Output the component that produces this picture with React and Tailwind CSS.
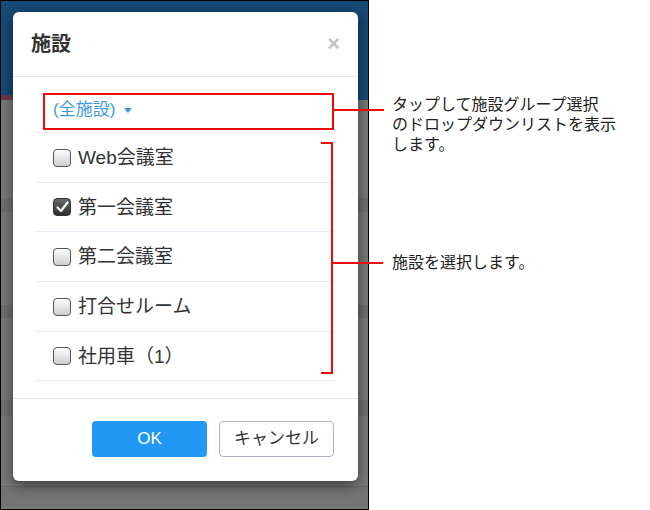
import React from 'react';

const jp = { fontFamily: '"Liberation Sans", "Noto Sans CJK JP", sans-serif' };

const facilities = [
  { id: 1, name: 'Web会議室', checked: false, h: 'h-[49px]' },
  { id: 2, name: '第一会議室', checked: true, h: 'h-[48px]' },
  { id: 3, name: '第二会議室', checked: false, h: 'h-[49px]' },
  { id: 4, name: '打合せルーム', checked: false, h: 'h-[49px]' },
  { id: 5, name: '社用車（1）', checked: false, h: 'h-[48px]' },
];

// iOS-style square checkbox
const CheckBox = ({ checked }) =>
  checked ? (
    <span className="w-[18px] h-[18px] rounded-[4px] border border-[#333] bg-gradient-to-b from-[#6a6a6a] to-[#2e2e2e] flex items-center justify-center shrink-0">
      <svg width="13" height="12" viewBox="0 0 13 12">
        <path d="M1.5 6.5 L5 10 L11.5 1.5" fill="none" stroke="#fff" strokeWidth="2.2" strokeLinecap="round" strokeLinejoin="round" />
      </svg>
    </span>
  ) : (
    <span className="w-[18px] h-[18px] rounded-[4px] border border-[#555] bg-gradient-to-b from-[#fdfdfd] to-[#cfcfcf] shrink-0" />
  );

const FacilityDialog = () => (
  <div className="absolute left-[12px] top-[11px] w-[345px] h-[469px] bg-white rounded-[6px] shadow-[0_4px_14px_rgba(0,0,0,0.55)] flex flex-col">
    <div className="h-[65px] flex items-center justify-between pl-[18px] pr-[18px] border-b border-[#e5e5e5] shrink-0">
      <h2 className="text-[20px] font-bold text-[#333] leading-none">施設</h2>
      <span className="text-[22px] font-bold text-[#c4c4c4] leading-none" style={{ fontFamily: '"Liberation Sans", sans-serif' }}>×</span>
    </div>

    <div className="px-[23px] pb-[17px]">
      <div className="h-[55px] flex items-end pb-[11px] pl-[17px] gap-[9px]">
        <span className="text-[17px] text-[#3d9be6] leading-[22px]">(全施設)</span>
        <span className="w-0 h-0 border-l-[4px] border-r-[4px] border-t-[5px] border-l-transparent border-r-transparent border-t-[#3d9be6] mb-[8px]" />
      </div>
      <ul className="border-t border-[#e4ebf4]">
        {facilities.map((f) => (
          <li key={f.id} className={`${f.h} box-content border-b border-[#e4ebf4] flex items-center pl-[17px] gap-[7px]`}>
            <CheckBox checked={f.checked} />
            <span className="text-[19px] text-[#333] leading-none">{f.name}</span>
          </li>
        ))}
      </ul>
    </div>

    <div className="flex-1 border-t border-[#e5e5e5] flex justify-end items-start pt-[22px] pr-[24px] gap-[12px]">
      <button className="w-[115px] h-[36px] rounded-[4px] bg-[#2199f4] text-white text-[17px]">OK</button>
      <button className="w-[115px] h-[36px] rounded-[4px] bg-white border border-[#a9b5c4] text-[#333] text-[17px]">キャンセル</button>
    </div>
  </div>
);

// dimmed app screen behind the modal
const DimmedScreen = () => (
  <div className="w-[369px] h-[510px] border border-black relative overflow-hidden bg-[#7a7a7a] shrink-0">
    <div className="h-[94px] bg-[#174a77]" />
    <div className="h-[5px] flex">
      <div className="w-[40px] bg-[#6e3a50]" />
      <div className="flex-1 bg-[#174a77]" />
    </div>
    <div className="h-[98px]" />
    <div className="h-[14px] bg-[#6f6f72]" />
    <div className="h-[93px]" />
    <div className="h-[13px] bg-[#6f6f72]" />
    <div className="h-[82px]" />
    <div className="h-[16px] bg-[#727274]" />
    <div className="h-[70px]" />
    <div className="h-[1px] bg-[#6a6a6a]" />
    <div className="h-[20px] bg-[#747474]" />
    <FacilityDialog />
  </div>
);

export default function App() {
  return (
    <div className="w-[650px] h-[510px] bg-white relative flex" style={jp}>
      <DimmedScreen />

      {/* callout: group dropdown */}
      <div className="absolute left-[43px] top-[93px] w-[291px] h-[37px] border-2 border-[#ee0a0a]" />
      <div className="absolute left-[334px] top-[109px] w-[50px] h-[2px] bg-[#ee0a0a]" />
      <p className="absolute left-[392px] top-[95px] w-[250px] text-[16px] leading-[20px] text-[#222]">
        タップして施設グループ選択
        <br />
        のドロップダウンリストを表示
        <br />
        します。
      </p>

      {/* callout: facility list bracket */}
      <div className="absolute left-[321px] top-[142px] w-[12px] h-[2px] bg-[#ee0a0a]" />
      <div className="absolute left-[331px] top-[142px] w-[2px] h-[232px] bg-[#ee0a0a]" />
      <div className="absolute left-[321px] top-[372px] w-[12px] h-[2px] bg-[#ee0a0a]" />
      <div className="absolute left-[333px] top-[262px] w-[50px] h-[2px] bg-[#ee0a0a]" />
      <p className="absolute left-[392px] top-[253px] text-[16px] leading-[20px] text-[#222]">施設を選択します。</p>
    </div>
  );
}
